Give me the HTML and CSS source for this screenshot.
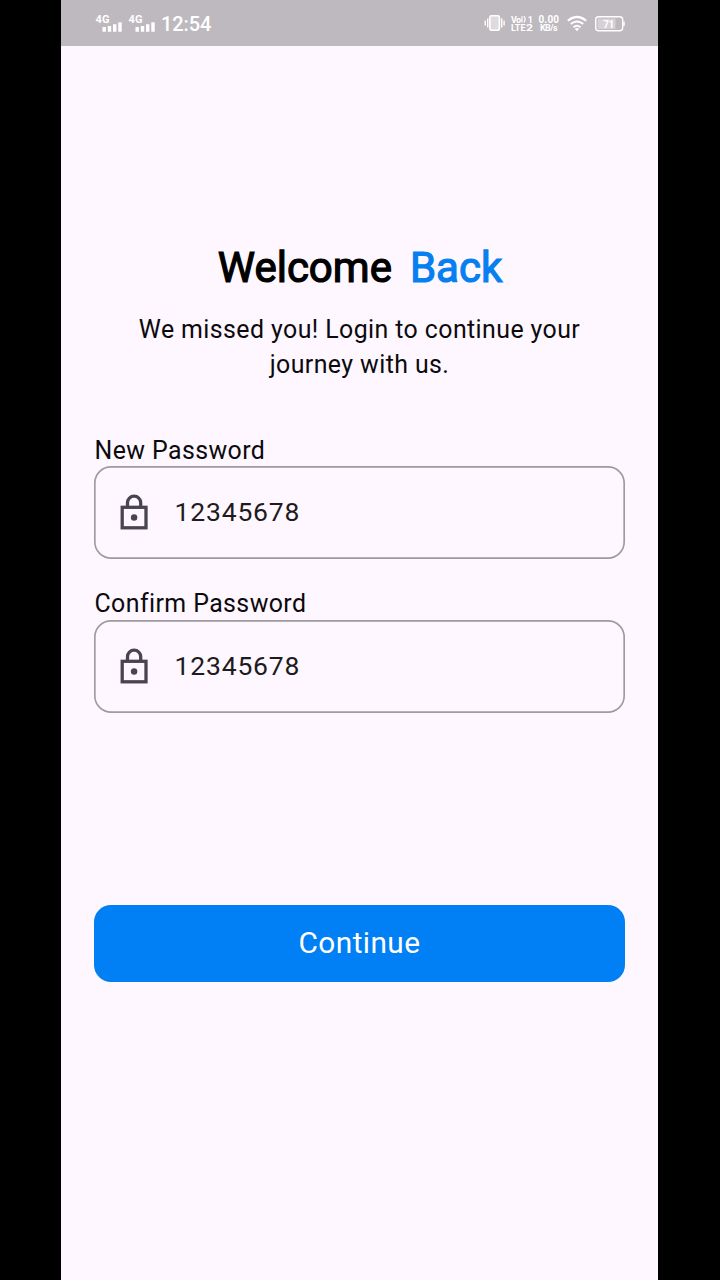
FILE: index.html
```html
<!DOCTYPE html>
<html lang="en">
<head>
<meta charset="utf-8">
<title>Welcome Back</title>
<link rel="stylesheet" href="styles.css">
</head>
<body>
<div class="phone">
  <header class="status">
    <svg class="signal" width="27" height="20" viewBox="0 0 27 20">
      <text class="gen" x="-0.500" y="10" textLength="14">4G</text>
      <path d="M8.200 14v4.700M13.500 13v5.700M18.700 11.200v7.500M24 9.300v9.400" class="bars"/>
    </svg>
    <svg class="signal second" width="27" height="20" viewBox="0 0 27 20">
      <text class="gen" x="-0.500" y="10" textLength="14">4G</text>
      <path d="M8.200 14v4.700M13.500 13v5.700M18.700 11.200v7.500M24 9.300v9.400" class="bars"/>
    </svg>
    <span class="clock">12:54</span>
    <svg class="vibrate" width="22" height="18" viewBox="0 0 22 18">
      <rect x="5.900" y="1.700" width="9.500" height="14.600" rx="1.500" class="device"/>
      <path d="M3.700 4.500v9M1.200 6.500v5M17.700 4.500v9M20.100 6.500v5" class="waves"/>
    </svg>
    <svg class="volte" width="22" height="18" viewBox="0 0 22 18">
      <text x="0" y="7.600" class="tiny" textLength="10">Vo</text>
      <path d="M11 1.200v6.400M13 1q2.200 3.200 0 6.400" class="arc"/>
      <text x="16.800" y="7.600" class="tiny">1</text>
      <text x="0" y="16.300" class="tiny" textLength="14.500">LTE</text>
      <text x="15" y="16.300" class="tiny wide" textLength="7" lengthAdjust="spacingAndGlyphs">2</text>
    </svg>
    <svg class="speed" width="22" height="18" viewBox="0 0 22 18">
      <text x="0.500" y="7.600" class="tiny big" textLength="20.500">0.00</text>
      <text x="2" y="16.300" class="tiny" textLength="17.500">KB/s</text>
    </svg>
    <svg class="wifi" width="20" height="17" viewBox="0 0 20 17">
      <path d="M0.800 5.700Q10-2 19.200 5.700M3.800 9Q10 4 16.200 9M6.500 12.200Q10 9.300 13.500 12.200"/>
      <path d="M7.800 13.800Q10 12.400 12.200 13.800L10 16.200z" class="dot"/>
    </svg>
    <svg class="battery" width="31" height="17" viewBox="0 0 31 17">
      <rect x="1.700" y="1.800" width="27" height="14" rx="3" class="case"/>
      <rect x="3.500" y="3.600" width="18" height="10.400" rx="1" class="charge"/>
      <path d="M30 6.500v4.500" class="tip"/>
      <text x="9.200" y="12.500" class="level" textLength="11">71</text>
    </svg>
  </header>
  <main class="screen">
    <h1 class="title"><span>Welcome</span><span class="accent">Back</span></h1>
    <p class="subtitle">We missed you! Login to continue your<br>journey with us.</p>
    <form class="form">
      <div class="group">
        <span class="label">New Password</span>
        <div class="field">
          <svg class="lock" width="40" height="40" viewBox="0 0 40 40">
            <rect x="8.200" y="15.300" width="23.800" height="20.500"/>
            <path d="M13.500 15v-4.200a6.600 6.600 0 0 1 13.200 0V15"/>
            <circle cx="20.100" cy="25.500" r="3.200"/>
          </svg>
          <span class="value">12345678</span>
        </div>
      </div>
      <div class="group">
        <span class="label">Confirm Password</span>
        <div class="field">
          <svg class="lock" width="40" height="40" viewBox="0 0 40 40">
            <rect x="8.200" y="15.300" width="23.800" height="20.500"/>
            <path d="M13.500 15v-4.200a6.600 6.600 0 0 1 13.200 0V15"/>
            <circle cx="20.100" cy="25.500" r="3.200"/>
          </svg>
          <span class="value">12345678</span>
        </div>
      </div>
      <button class="continue" type="button">Continue</button>
    </form>
  </main>
</div>
</body>
</html>
```
FILE: styles.css
```css
* { box-sizing: border-box; }
body {
  margin: 0;
  height: 1280px;
  display: flex;
  justify-content: center;
  padding-right: 1px;
  background: #000;
  font-family: Roboto, sans-serif;
  overflow: hidden;
}
.phone {
  width: 597px;
  height: 1280px;
  background: #fef7ff;
}
.status {
  height: 46px;
  padding-left: 35px;
  display: flex;
  align-items: flex-start;
  background: #beb9bf;
  color: #fff;
}
.status svg { flex: none; overflow: visible; }
.signal { margin-top: 13px; }
.second { margin-left: 6px; }
.gen { font-size: 11px; font-weight: 700; fill: #fff; }
.bars { stroke: #fff; stroke-width: 3.4; }
.clock {
  width: 52px;
  margin: 12px 0 0 5px;
  font-size: 20px;
  line-height: 24px;
  font-weight: 500;
  letter-spacing: -0.1px;
}
.vibrate { margin: 14px 0 0 271px; }
.device { fill: #dedbdf; stroke: #fff; stroke-width: 1.6; }
.waves { stroke: #fff; stroke-width: 1.4; }
.volte { margin: 15px 0 0 5px; }
.speed { margin: 15px 0 0 5px; }
.tiny { font-size: 9px; font-weight: 700; fill: #fff; }
.big { font-size: 10px; }
.wide { font-size: 9px; }
.arc { fill: none; stroke: #fff; stroke-width: 1.2; }
.wifi { margin: 15px 0 0 7px; fill: none; stroke: #fff; stroke-width: 2.1; }
.wifi .dot { fill: #fff; stroke: none; }
.battery { margin: 15px 0 0 7px; }
.case { fill: none; stroke: #fff; stroke-width: 1.4; }
.charge { fill: #d5d1d6; }
.tip { stroke: #fff; stroke-width: 1.4; }
.level { font-size: 10px; font-weight: 700; fill: #fff; }
.screen { padding: 196px 33px 0; }
.title {
  margin: 0;
  padding-left: 1px;
  display: flex;
  justify-content: center;
  gap: 18px;
  font-size: 42px;
  line-height: 52px;
  font-weight: 400;
  -webkit-text-stroke: 1.2px currentColor;
  color: #000;
}
.accent { color: #067ff0; }
.subtitle {
  margin: 18px 0 0;
  text-align: center;
  font-size: 24.9px;
  line-height: 35px;
  letter-spacing: 0.42px;
  color: #0c0a0d;
}
.form { margin-top: 54px; display: flex; flex-direction: column; }
.group { height: 123.500px; margin-bottom: 30px; display: flex; flex-direction: column; }
.label {
  height: 30px;
  padding-left: 0.5px;
  font-size: 24.9px;
  line-height: 29px;
  letter-spacing: 0.42px;
  color: #0c0a0d;
}
.group + .group .label { line-height: 28px; }
.field {
  height: 93px;
  box-shadow: inset 0 0 0 1.66px #9e9a9f;
  border-radius: 17px;
  display: flex;
  align-items: center;
  padding: 0 0 1px 20px;
}
.lock { fill: none; stroke: #49454f; stroke-width: 3.3; }
.lock circle { fill: #49454f; stroke: none; }
.value {
  margin-left: 20.5px;
  font-size: 26.5px;
  line-height: 40px;
  letter-spacing: 0.83px;
  color: #1d1b20;
}
.continue {
  height: 77px;
  margin: 162px 0 0;
  padding: 0 0 2px;
  border: 0;
  border-radius: 17px;
  background: #0080f4;
  color: #fff;
  font: 400 29.8px/40px Roboto, sans-serif;
  letter-spacing: 0.42px;
}
```
